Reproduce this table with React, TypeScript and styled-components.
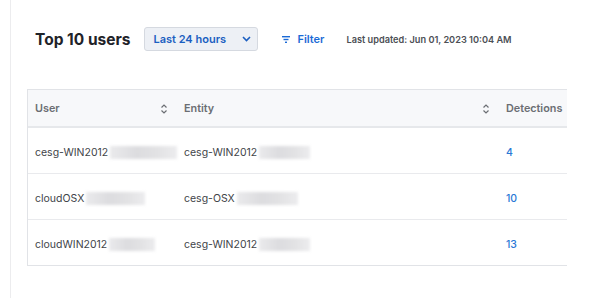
import React from 'react';
import styled, { createGlobalStyle } from 'styled-components';

const GlobalStyle = createGlobalStyle`
  body {
    margin: 0;
    background: #ffffff;
    font-family: Inter, "Noto Sans", sans-serif;
  }
`;

const Page = styled.div`
  margin-left: 10px;
  border-left: 1px solid #ececee;
  height: 298px;
  padding: 27px 0 0 16px;
  box-sizing: border-box;
`;

const Toolbar = styled.div`
  display: flex;
  align-items: center;
  height: 24px;
  padding-left: 8px;
`;

const Title = styled.h2`
  margin: 0 14px 0 0;
  font-size: 15.5px;
  font-weight: 700;
  color: #1f2329;
`;

const Select = styled.div`
  display: flex;
  align-items: center;
  justify-content: space-between;
  width: 114px;
  height: 24px;
  box-sizing: border-box;
  padding: 0 6px 0 8px;
  background: #edf0f5;
  border: 1px solid #d5d9e0;
  border-radius: 3px;
  color: #1b5fc1;
  font-size: 11px;
  font-weight: 600;
`;

const FilterButton = styled.div`
  display: flex;
  align-items: center;
  gap: 7px;
  margin-left: 24px;
  color: #1b6ad6;
  font-size: 11px;
  font-weight: 600;
`;

const Updated = styled.span`
  margin-left: 22px;
  font-size: 9.2px;
  font-weight: 600;
  color: #4c4f55;
`;

const TableWrap = styled.div`
  margin-top: 38px;
  width: 539px;
  overflow: hidden;
  border: 1px solid #e1e3e7;
  border-right: none;
`;

const Table = styled.div`
  width: 620px;
`;

const Row = styled.div<{ $head?: boolean }>`
  display: grid;
  grid-template-columns: 149px 322px 149px;
  height: ${({ $head }) => ($head ? 36 : 45)}px;
  background: ${({ $head }) => ($head ? '#f7f8fa' : '#ffffff')};
  border-bottom: ${({ $head }) => ($head ? '2px solid #e6e8eb' : '1px solid #e9eaed')};
  &:last-child {
    border-bottom: none;
  }
`;

const HeadCell = styled.div`
  display: flex;
  align-items: center;
  justify-content: space-between;
  padding: 1px 9px 0 7px;
  font-size: 10.8px;
  font-weight: 600;
  color: #6b6e73;
`;

const Cell = styled.div<{ $link?: boolean }>`
  display: flex;
  align-items: center;
  gap: 2px;
  padding: 4px 0 0 7px;
  white-space: nowrap;
  font-size: 10.5px;
  color: ${({ $link }) => ($link ? '#2a78d6' : '#414449')};
  font-weight: ${({ $link }) => ($link ? 500 : 400)};
`;

const Blur = styled.span<{ $w: number }>`
  display: inline-block;
  flex-shrink: 0;
  width: ${({ $w }) => $w}px;
  height: 13px;
  background: linear-gradient(90deg, #eaeaec, #dcdcdf 40%, #e2e2e4 70%, #ececee);
  filter: blur(1.5px);
`;

const SortIcon = () => (
  <svg width="8" height="12" viewBox="0 0 8 12">
    <path d="M1.5 4.5 L4 2 L6.5 4.5 M1.5 7.5 L4 10 L6.5 7.5" fill="none" stroke="#6b6e73" strokeWidth="1.2" />
  </svg>
);

const rows = [
  { user: 'cesg-WIN2012', ub: 67, entity: 'cesg-WIN2012', eb: 51, count: 4 },
  { user: 'cloudOSX', ub: 59, entity: 'cesg-OSX', eb: 61, count: 10 },
  { user: 'cloudWIN2012', ub: 46, entity: 'cesg-WIN2012', eb: 51, count: 13 },
];

export default function App() {
  return (
    <>
      <GlobalStyle />
      <Page>
        <Toolbar>
          <Title>Top 10 users</Title>
          <Select>
            Last 24 hours
            <svg width="9" height="6" viewBox="0 0 9 6">
              <path d="M1 1 L4.5 4.5 L8 1" fill="none" stroke="#1b5fc1" strokeWidth="1.6" />
            </svg>
          </Select>
          <FilterButton>
            <svg width="8" height="7" viewBox="0 0 8 7">
              <rect x="0" y="0" width="8" height="1.4" fill="#1b6ad6" />
              <rect x="1.5" y="2.8" width="5" height="1.4" fill="#1b6ad6" />
              <rect x="3" y="5.6" width="2" height="1.4" fill="#1b6ad6" />
            </svg>
            Filter
          </FilterButton>
          <Updated>Last updated: Jun 01, 2023 10:04 AM</Updated>
        </Toolbar>
        <TableWrap>
          <Table>
            <Row $head>
              <HeadCell>User<SortIcon /></HeadCell>
              <HeadCell>Entity<SortIcon /></HeadCell>
              <HeadCell>Detections</HeadCell>
            </Row>
            {rows.map((r) => (
              <Row key={r.user}>
                <Cell>{r.user}<Blur $w={r.ub} /></Cell>
                <Cell>{r.entity}<Blur $w={r.eb} /></Cell>
                <Cell $link>{r.count}</Cell>
              </Row>
            ))}
          </Table>
        </TableWrap>
      </Page>
    </>
  );
}
